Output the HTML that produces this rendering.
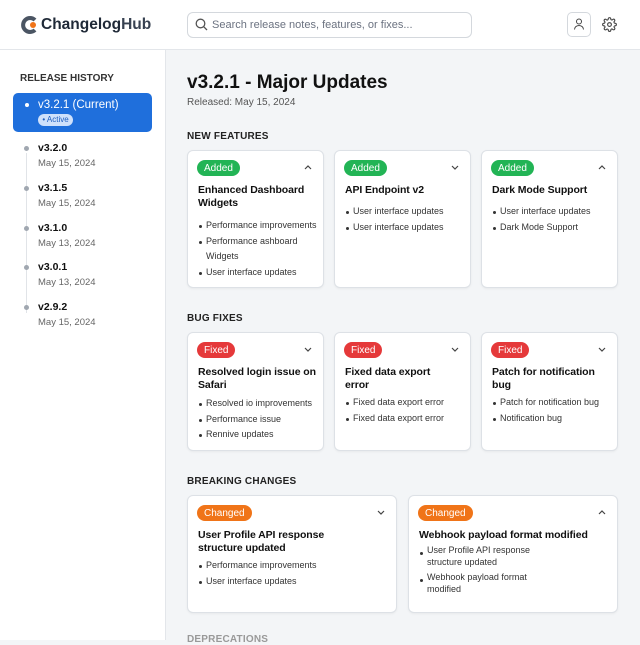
<!DOCTYPE html>
<html><head><meta charset="utf-8"><style>
*{box-sizing:border-box;margin:0;padding:0}
body{width:640px;height:640px;overflow:hidden;font-family:"Liberation Sans",sans-serif;background:#f3f5f7;position:relative;color:#111}
.hdr{position:absolute;left:0;top:0;width:640px;height:50px;background:#fff;border-bottom:1px solid #e3e6ea}
.side{position:absolute;left:0;top:50px;width:166px;height:590px;background:#fff;border-right:1px solid #e3e6ea}
.abs{position:absolute}
.card{position:absolute;background:#fff;border:1px solid #dde1e6;border-radius:6px;box-shadow:0 1px 2px rgba(0,0,0,.05)}
.tag{position:absolute;left:9px;top:9px;height:16px;padding:0 7px;border-radius:8px;color:#fff;font-size:10px;line-height:17px}
.g{background:#22b455}.r{background:#e5393a}.o{background:#f07418}
.ttl{position:absolute;left:10px;top:33px;font-size:10.5px;font-weight:bold;line-height:13px;color:#111;letter-spacing:-.1px}
ul{position:absolute;left:10px;list-style:none;font-size:9px;line-height:15.5px;color:#333}
ul li{padding-left:8px;position:relative}
ul li:before{content:"";position:absolute;left:1px;top:7px;width:3px;height:3px;border-radius:50%;background:#333}
.chev{position:absolute;right:10px;top:12px;width:10px;height:8px}
.sec{position:absolute;left:187px;font-size:10px;font-weight:bold;color:#222;letter-spacing:.2px}
.ver{position:absolute;left:38px;font-size:10.5px;font-weight:bold}
.dt{position:absolute;left:38px;font-size:9.5px;color:#666}
.dot{position:absolute;left:24px;width:5px;height:5px;border-radius:50%;background:#a0a7b0}
</style></head><body>
<div class="hdr">
 <svg class="abs" style="left:20px;top:15px" width="20" height="20" viewBox="0 0 20 20"><path d="M15 5A7 7 0 1 0 15 15" stroke="#4b5563" stroke-width="4" fill="none"/><circle cx="13" cy="10" r="3" fill="#f07418"/></svg>
 <div class="abs" style="left:41px;top:16px;font-size:15.5px;font-weight:bold;color:#1f2937">Changelog<span style="color:#374151">Hub</span></div>
 <div class="abs" style="left:187px;top:12px;width:285px;height:26px;border:1px solid #d4d8dd;border-radius:6px"></div>
 <svg class="abs" style="left:195px;top:18px" width="13" height="13" viewBox="0 0 13 13"><circle cx="5.5" cy="5.5" r="4.3" stroke="#555" stroke-width="1.3" fill="none"/><path d="M8.7 8.7L12 12" stroke="#555" stroke-width="1.3"/></svg>
 <div class="abs" style="left:212px;top:19px;font-size:11px;color:#6b7280">Search release notes, features, or fixes...</div>
 <div class="abs" style="left:567px;top:12px;width:24px;height:25px;border:1px solid #d4d8dd;border-radius:5px"></div>
 <svg class="abs" style="left:572px;top:17px" width="14" height="14" viewBox="0 0 14 14"><circle cx="7" cy="4.5" r="2.5" stroke="#444" fill="none"/><path d="M2.5 12.5a4.5 4 0 0 1 9 0" stroke="#444" fill="none"/></svg>
 <svg class="abs" style="left:602px;top:17px" width="15" height="15" viewBox="0 0 24 24" fill="none" stroke="#444" stroke-width="1.8"><circle cx="12" cy="12" r="3"/><path d="M19.4 15a1.7 1.7 0 0 0 .3 1.8l.1.1a2 2 0 1 1-2.8 2.8l-.1-.1a1.7 1.7 0 0 0-1.8-.3 1.7 1.7 0 0 0-1 1.5V21a2 2 0 1 1-4 0v-.1a1.7 1.7 0 0 0-1.1-1.5 1.7 1.7 0 0 0-1.8.3l-.1.1a2 2 0 1 1-2.8-2.8l.1-.1a1.7 1.7 0 0 0 .3-1.8 1.7 1.7 0 0 0-1.5-1H3a2 2 0 1 1 0-4h.1a1.7 1.7 0 0 0 1.5-1.1 1.7 1.7 0 0 0-.3-1.8l-.1-.1a2 2 0 1 1 2.8-2.8l.1.1a1.7 1.7 0 0 0 1.8.3H9a1.7 1.7 0 0 0 1-1.5V3a2 2 0 1 1 4 0v.1a1.7 1.7 0 0 0 1 1.5 1.7 1.7 0 0 0 1.8-.3l.1-.1a2 2 0 1 1 2.8 2.8l-.1.1a1.7 1.7 0 0 0-.3 1.8V9a1.7 1.7 0 0 0 1.5 1H21a2 2 0 1 1 0 4h-.1a1.7 1.7 0 0 0-1.5 1z"/></svg>
</div>
<div class="side">
 <div class="abs" style="left:20px;top:23px;font-size:10px;font-weight:bold;color:#333">RELEASE HISTORY</div>
 <div class="abs" style="left:13px;top:43px;width:139px;height:39px;background:#1f6fdc;border-radius:5px"></div>
 <div class="abs" style="left:25px;top:53px;width:4px;height:4px;border-radius:50%;background:#fff"></div>
 <div class="abs" style="left:38px;top:49px;font-size:11.5px;color:#fff">v3.2.1 (Current)</div>
 <div class="abs" style="left:38px;top:64px;width:35px;height:12px;border-radius:6px;background:#cfe1fb;color:#1f5fc0;font-size:8px;line-height:12px;text-align:center">• Active</div>
 <div class="abs" style="left:26px;top:103px;width:1px;height:160px;background:#e1e4e8"></div>
 <div class="dot" style="top:96px"></div><div class="ver" style="top:92px">v3.2.0</div><div class="dt" style="top:108px">May 15, 2024</div>
 <div class="dot" style="top:136px"></div><div class="ver" style="top:132px">v3.1.5</div><div class="dt" style="top:148px">May 15, 2024</div>
 <div class="dot" style="top:176px"></div><div class="ver" style="top:172px">v3.1.0</div><div class="dt" style="top:188px">May 13, 2024</div>
 <div class="dot" style="top:215px"></div><div class="ver" style="top:211px">v3.0.1</div><div class="dt" style="top:227px">May 13, 2024</div>
 <div class="dot" style="top:255px"></div><div class="ver" style="top:251px">v2.9.2</div><div class="dt" style="top:267px">May 15, 2024</div>
</div>
<div class="abs" style="left:187px;top:72px;font-size:19px;font-weight:bold;color:#111">v3.2.1 - Major Updates</div>
<div class="abs" style="left:187px;top:97px;font-size:10px;color:#555">Released: May 15, 2024</div>

<div class="sec" style="top:131px">NEW FEATURES</div>
<div class="card" style="left:187px;top:150px;width:137px;height:138px"><div class="tag g">Added</div><svg class="chev" viewBox="0 0 10 8"><path d="M2 6L5 3L8 6" stroke="#444" fill="none" stroke-width="1.2"/></svg><div class="ttl">Enhanced Dashboard<br>Widgets</div><ul style="top:67px"><li>Performance improvements</li><li>Performance ashboard<br>Widgets</li><li>User interface updates</li></ul></div>
<div class="card" style="left:334px;top:150px;width:137px;height:138px"><div class="tag g">Added</div><svg class="chev" viewBox="0 0 10 8"><path d="M2 3L5 6L8 3" stroke="#444" fill="none" stroke-width="1.2"/></svg><div class="ttl">API Endpoint v2</div><ul style="top:53px"><li>User interface updates</li><li>User interface updates</li></ul></div>
<div class="card" style="left:481px;top:150px;width:137px;height:138px"><div class="tag g">Added</div><svg class="chev" viewBox="0 0 10 8"><path d="M2 6L5 3L8 6" stroke="#444" fill="none" stroke-width="1.2"/></svg><div class="ttl">Dark Mode Support</div><ul style="top:53px"><li>User interface updates</li><li>Dark Mode Support</li></ul></div>

<div class="sec" style="top:313px">BUG FIXES</div>
<div class="card" style="left:187px;top:332px;width:137px;height:119px"><div class="tag r">Fixed</div><svg class="chev" viewBox="0 0 10 8"><path d="M2 3L5 6L8 3" stroke="#444" fill="none" stroke-width="1.2"/></svg><div class="ttl" style="white-space:nowrap">Resolved login issue on<br>Safari</div><ul style="top:63px"><li>Resolved io improvements</li><li>Performance issue</li><li>Rennive updates</li></ul></div>
<div class="card" style="left:334px;top:332px;width:137px;height:119px"><div class="tag r">Fixed</div><svg class="chev" viewBox="0 0 10 8"><path d="M2 3L5 6L8 3" stroke="#444" fill="none" stroke-width="1.2"/></svg><div class="ttl">Fixed data export<br>error</div><ul style="top:62px"><li>Fixed data export error</li><li>Fixed data export error</li></ul></div>
<div class="card" style="left:481px;top:332px;width:137px;height:119px"><div class="tag r">Fixed</div><svg class="chev" viewBox="0 0 10 8"><path d="M2 3L5 6L8 3" stroke="#444" fill="none" stroke-width="1.2"/></svg><div class="ttl">Patch for notification<br>bug</div><ul style="top:62px"><li>Patch for notification bug</li><li>Notification bug</li></ul></div>

<div class="sec" style="top:476px">BREAKING CHANGES</div>
<div class="card" style="left:187px;top:495px;width:210px;height:118px"><div class="tag o">Changed</div><svg class="chev" viewBox="0 0 10 8"><path d="M2 3L5 6L8 3" stroke="#444" fill="none" stroke-width="1.2"/></svg><div class="ttl">User Profile API response<br>structure updated</div><ul style="top:62px"><li>Performance improvements</li><li>User interface updates</li></ul></div>
<div class="card" style="left:408px;top:495px;width:210px;height:118px"><div class="tag o">Changed</div><svg class="chev" viewBox="0 0 10 8"><path d="M2 6L5 3L8 6" stroke="#444" fill="none" stroke-width="1.2"/></svg><div class="ttl">Webhook payload format modified</div><ul style="top:49px;line-height:11.5px"><li style="margin-bottom:4px">User Profile API response<br>structure updated</li><li>Webhook payload format<br>modified</li></ul></div>
<div class="sec" style="top:634px;color:#999">DEPRECATIONS</div>
</body></html>
